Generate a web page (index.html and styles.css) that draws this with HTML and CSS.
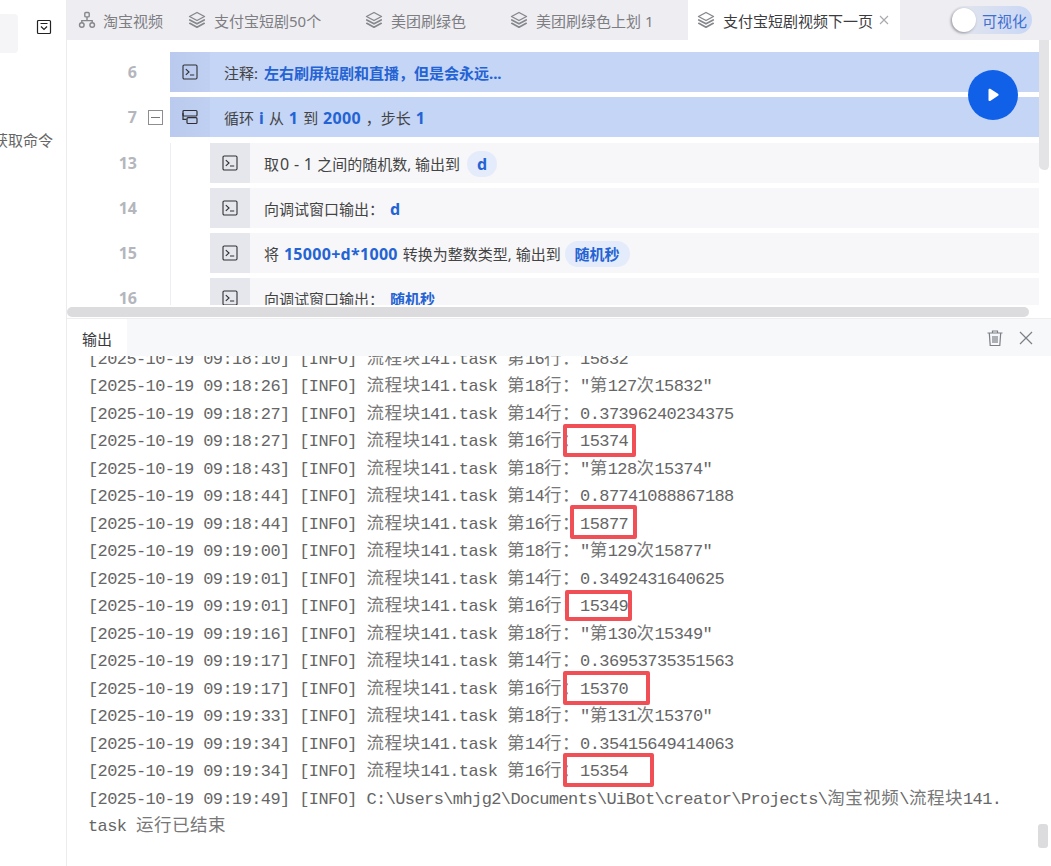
FILE: index.html
```html
<!DOCTYPE html>
<html lang="zh">
<head>
<meta charset="utf-8">
<title>流程块</title>
<link rel="stylesheet" href="styles.css">
</head>
<body>
<svg class="defs" width="0" height="0" aria-hidden="true">
  <symbol id="i-layers" viewBox="0 0 18 18"><path d="M9 1.5 16.5 5.5 9 9.5 1.5 5.5Z" fill="none" stroke="currentColor" stroke-width="1.4" stroke-linejoin="round"/><path d="M1.8 9 9 12.8 16.2 9M1.8 12.3 9 16.2 16.2 12.3" fill="none" stroke="currentColor" stroke-width="1.7" stroke-linecap="round" stroke-linejoin="round"/></symbol>
  <symbol id="i-term" viewBox="0 0 16 16"><rect x="1" y="1" width="14" height="14" rx="1.2" fill="none" stroke="currentColor" stroke-width="1.1"/><path d="M3.8 5.2 7 8 3.8 10.8M8 11h4.2" fill="none" stroke="currentColor" stroke-width="1.1"/></symbol>
</svg>
<div class="app">
  <aside class="sidebar">
    <div class="side-top">
      <div class="side-active"></div>
      <svg class="side-icon" width="16" height="16" viewBox="0 0 16 16"><rect x="1.5" y="1.5" width="13" height="13" rx="1" fill="#fff" stroke="#222" stroke-width="1.2"/><path d="M4.5 4.5h7" stroke="#222" stroke-width="1"/><path d="M5 7.5 8 10.5 11 7.5" fill="none" stroke="#222" stroke-width="1.2"/></svg>
    </div>
    <div class="side-label"><span>获取命令</span></div>
  </aside>
  <main class="main">
    <nav class="tabs">
      <div class="tab tab-1"><svg class="tab-icon" width="18" height="18" viewBox="0 0 18 18"><g fill="none" stroke="currentColor" stroke-width="1.4"><rect x="6.8" y="1.5" width="4.4" height="4.4" rx="1"/><circle cx="3.8" cy="14" r="2.3"/><circle cx="14.2" cy="14" r="2.3"/><path d="M9 6v3.6M3.8 11.6V9.6h10.4v2"/></g></svg>淘宝视频</div>
      <div class="tab tab-2"><svg class="tab-icon" width="18" height="18"><use href="#i-layers"/></svg>支付宝短剧50个</div>
      <div class="tab tab-3"><svg class="tab-icon" width="18" height="18"><use href="#i-layers"/></svg>美团刷绿色</div>
      <div class="tab tab-4"><svg class="tab-icon" width="18" height="18"><use href="#i-layers"/></svg>美团刷绿色上划 1</div>
      <div class="tab tab-active"><svg class="tab-icon" width="18" height="18"><use href="#i-layers"/></svg>支付宝短剧视频下一页<svg class="tab-close" width="10" height="10" viewBox="0 0 10 10"><path d="M1 1 9 9M9 1 1 9" stroke="#a8a8ad" stroke-width="1.1"/></svg></div>
      <div class="toggle"><span class="knob"></span><span class="toggle-text">可视化</span></div>
    </nav>
    <section class="editor">
      <div class="row">
        <div class="gutter"><span class="num">6</span><span class="fold-slot"></span></div>
        <div class="block selected"><div class="cell"><svg width="16" height="16"><use href="#i-term"/></svg></div><div class="stmt">注释: <b class="val">左右刷屏短剧和直播，但是会永远...</b></div></div>
      </div>
      <div class="row">
        <div class="gutter"><span class="num">7</span><span class="fold-slot"><span class="fold"></span></span></div>
        <div class="block selected"><div class="cell"><svg width="16" height="16" viewBox="0 0 16 16"><g fill="none" stroke="currentColor" stroke-width="1.2"><rect x="1" y="1.5" width="14" height="5.5" rx="1"/><path d="M1 4v6.3h3.5"/><rect x="5" y="8.7" width="10" height="5.8" rx="1"/></g></svg></div><div class="stmt">循环 <b class="n">i</b> 从 <b class="n">1</b> 到 <b class="n">2000</b> ，步长 <b class="n">1</b></div></div>
      </div>
      <div class="nested">
        <div class="row">
          <div class="gutter"><span class="num">13</span><span class="fold-slot"></span></div>
          <div class="block child"><div class="cell"><svg width="16" height="16"><use href="#i-term"/></svg></div><div class="stmt">取<span class="lat">0 - 1</span> 之间的随机数, 输出到 <span class="pill n">d</span></div></div>
        </div>
        <div class="row">
          <div class="gutter"><span class="num">14</span><span class="fold-slot"></span></div>
          <div class="block child"><div class="cell"><svg width="16" height="16"><use href="#i-term"/></svg></div><div class="stmt">向调试窗口输出： <b class="val n">d</b></div></div>
        </div>
        <div class="row">
          <div class="gutter"><span class="num">15</span><span class="fold-slot"></span></div>
          <div class="block child"><div class="cell"><svg width="16" height="16"><use href="#i-term"/></svg></div><div class="stmt">将 <b class="n">15000+d*1000</b> 转换为整数类型, 输出到 <span class="pill">随机秒</span></div></div>
        </div>
        <div class="row">
          <div class="gutter"><span class="num">16</span><span class="fold-slot"></span></div>
          <div class="block child"><div class="cell"><svg width="16" height="16"><use href="#i-term"/></svg></div><div class="stmt">向调试窗口输出： <b class="val">随机秒</b></div></div>
        </div>
      </div>
      <div class="vscroll"></div>
      <button class="play" aria-label="运行"><svg width="16" height="16" viewBox="0 0 16 16"><path d="M3.5 2.8c0-.9.9-1.4 1.7-1L13 6.7c.8.5.8 1.6 0 2.1l-7.8 5.1c-.8.5-1.7 0-1.7-1Z" fill="#fff"/></svg></button>
    </section>
    <div class="hscroll"><div class="hbar"></div></div>
    <section class="output">
      <header class="out-head">
        <div class="out-tab">输出</div>
        <div class="out-actions">
          <svg width="18" height="18" viewBox="0 0 18 18"><g fill="none" stroke="#7b7f86" stroke-width="1.2"><path d="M1.5 4h15M6.5 4V2h5v2M3.3 4l.9 12.5h9.6L14.7 4M7 7v7M9 7v7M11 7v7"/></g></svg>
          <svg width="14" height="14" viewBox="0 0 14 14"><path d="M1 1 13 13M13 1 1 13" stroke="#7b7f86" stroke-width="1.2"/></svg>
        </div>
      </header>
      <div class="log-view">
        <div class="log">
          <div>[2025-10-19 09:18:10] [INFO] <em>流程块</em>141.task <em>第</em>16<em>行：</em>15832</div>
          <div>[2025-10-19 09:18:26] [INFO] <em>流程块</em>141.task <em>第</em>18<em>行：</em>"<em>第</em>127<em>次</em>15832"</div>
          <div>[2025-10-19 09:18:27] [INFO] <em>流程块</em>141.task <em>第</em>14<em>行：</em>0.37396240234375</div>
          <div>[2025-10-19 09:18:27] [INFO] <em>流程块</em>141.task <em>第</em>16<em>行：</em>15374</div>
          <div>[2025-10-19 09:18:43] [INFO] <em>流程块</em>141.task <em>第</em>18<em>行：</em>"<em>第</em>128<em>次</em>15374"</div>
          <div>[2025-10-19 09:18:44] [INFO] <em>流程块</em>141.task <em>第</em>14<em>行：</em>0.87741088867188</div>
          <div>[2025-10-19 09:18:44] [INFO] <em>流程块</em>141.task <em>第</em>16<em>行：</em>15877</div>
          <div>[2025-10-19 09:19:00] [INFO] <em>流程块</em>141.task <em>第</em>18<em>行：</em>"<em>第</em>129<em>次</em>15877"</div>
          <div>[2025-10-19 09:19:01] [INFO] <em>流程块</em>141.task <em>第</em>14<em>行：</em>0.3492431640625</div>
          <div>[2025-10-19 09:19:01] [INFO] <em>流程块</em>141.task <em>第</em>16<em>行：</em>15349</div>
          <div>[2025-10-19 09:19:16] [INFO] <em>流程块</em>141.task <em>第</em>18<em>行：</em>"<em>第</em>130<em>次</em>15349"</div>
          <div>[2025-10-19 09:19:17] [INFO] <em>流程块</em>141.task <em>第</em>14<em>行：</em>0.36953735351563</div>
          <div>[2025-10-19 09:19:17] [INFO] <em>流程块</em>141.task <em>第</em>16<em>行：</em>15370</div>
          <div>[2025-10-19 09:19:33] [INFO] <em>流程块</em>141.task <em>第</em>18<em>行：</em>"<em>第</em>131<em>次</em>15370"</div>
          <div>[2025-10-19 09:19:34] [INFO] <em>流程块</em>141.task <em>第</em>14<em>行：</em>0.35415649414063</div>
          <div>[2025-10-19 09:19:34] [INFO] <em>流程块</em>141.task <em>第</em>16<em>行：</em>15354</div>
          <div>[2025-10-19 09:19:49] [INFO] C:\Users\mhjg2\Documents\UiBot\creator\Projects\<em>淘宝视频</em>\<em>流程块</em>141.<wbr>task <em>运行已结束</em></div>
        </div>
        <div class="mark mark-1"></div>
        <div class="mark mark-2"></div>
        <div class="mark mark-3"></div>
        <div class="mark mark-4"></div>
        <div class="mark mark-5"></div>
        <div class="log-scroll"></div>
      </div>
    </section>
  </main>
</div>
</body>
</html>
```
FILE: styles.css
```css
* { box-sizing: border-box; }
html, body { margin: 0; padding: 0; background: #fff; }
body { font-family: "Noto Sans", "Noto Sans CJK SC", "Liberation Sans", sans-serif; font-size: 15px; color: #444; overflow: hidden; }
.defs { position: absolute; }
.app { display: flex; width: 1051px; height: 866px; overflow: hidden; }

.sidebar { width: 67px; flex: none; border-right: 1px solid #ececee; background: #fff; overflow: hidden; }
.side-top { display: flex; align-items: center; height: 39px; margin-top: 14px; }
.side-active { width: 18px; height: 39px; background: #f5f5f7; border-radius: 0 4px 4px 0; }
.side-icon { margin-left: 18px; margin-top: -13px; }
.side-label { display: flex; justify-content: flex-end; width: 53px; margin-top: 77px; line-height: 20px; color: #666; white-space: nowrap; }
.side-label span { flex: none; }

.main { flex: 1; min-width: 0; display: flex; flex-direction: column; }

.tabs { display: flex; align-items: stretch; height: 40px; flex: none; background: #eeeef2; color: #7d7d82; position: relative; }
.tab { display: flex; align-items: center; white-space: nowrap; }
.tab-icon { flex: none; margin-right: 8px; color: #85878c; }
.tab-1 { width: 111px; padding-left: 11px; }
.tab-1 .tab-icon { margin-right: 7px; }
.tab-2 { width: 177px; padding-left: 10px; }
.tab-3 { width: 145px; padding-left: 10px; }
.tab-4 { width: 188px; padding-left: 10px; }
.tab-active { width: 212px; padding-left: 9px; background: #fff; color: #3c3c3f; }
.tab-close { margin-left: 6px; }
.toggle { position: absolute; left: 883px; top: 6px; width: 82px; height: 28px; border-radius: 14px; background: linear-gradient(90deg, #e6e7ec, #c9d7f6); display: flex; align-items: center; padding: 0 5px 0 2px; justify-content: space-between; }
.knob { width: 24px; height: 24px; border-radius: 50%; background: #fff; box-shadow: -1px 1px 3px rgba(0,0,0,.35); }
.toggle-text { color: #3f6fd1; }

.editor { position: relative; height: 265px; flex: none; padding-top: 12px; overflow: hidden; }
.row { display: flex; height: 40px; margin-bottom: 5px; width: 972px; }
.nested { margin-top: 6px; background: linear-gradient(90deg, transparent 103px, #eeeef0 103px, #eeeef0 104px, transparent 104px); }
.gutter { width: 103px; flex: none; display: flex; align-items: center; font-weight: 700; color: #b4b6bd; font-size: 16px; }
.num { width: 70px; text-align: right; }
.fold-slot { margin-left: 11px; width: 15px; height: 15px; }
.fold { display: block; width: 15px; height: 15px; border: 1px solid #8d8d92; position: relative; }
.fold::after { content: ""; position: absolute; left: 2px; right: 2px; top: 6px; height: 1px; background: #77777b; }
.block { flex: 1; display: flex; align-items: center; min-width: 0; }
.cell { width: 40px; height: 40px; flex: none; display: flex; align-items: center; justify-content: center; color: #2f2f33; }
.stmt { white-space: pre; line-height: 26px; padding-top: 1px; }
.stmt b { color: #2463d3; font-weight: 700; }
.stmt .n, .pill.n { font-size: 16px; }
.stmt .n { letter-spacing: .3px; margin: 0 1px; }
.lat { font-size: 16px; letter-spacing: .3px; margin-left: 1px; }
.selected { background: #c4d5f6; }
.selected .cell { background: linear-gradient(90deg, #b9caee, #bfd0f2); }
.selected .stmt { margin-left: 14px; }
.child { margin-left: 40px; background: #f7f7f9; }
.child .cell { background: #e6e7ec; }
.child .stmt { margin-left: 14px; }
.pill { display: inline-block; height: 26px; line-height: 26px; padding: 0 10px; border-radius: 13px; background: #e4ebfa; color: #2463d3; font-weight: 700; vertical-align: top; }
.pill.n { margin-left: 3px; }
.stmt .val { margin-left: 2px; }
.vscroll { position: absolute; right: 0; top: 0; width: 12px; height: 130px; background: #e4e4e6; border: 1px solid #fff; border-width: 0 2px 0 0; border-radius: 0 0 5px 5px; }
.play { position: absolute; left: 901px; top: 30px; width: 50px; height: 50px; padding: 0; border: 0; border-radius: 50%; background: #1160e8; display: flex; align-items: center; justify-content: center; }

.hscroll { height: 13px; flex: none; padding-top: 2px; background: #fff; }
.hbar { width: 962px; height: 10px; border-radius: 5px; background: #dcdcde; }

.output { flex: 1; min-height: 0; display: flex; flex-direction: column; border-top: 1px solid #eeeef0; }
.out-head { height: 37px; flex: none; display: flex; justify-content: space-between; align-items: center; background: #f7f8fa; position: relative; z-index: 1; }
.out-tab { width: 60px; height: 100%; padding-left: 15px; line-height: 40px; background: #fff; color: #3a3a3d; }
.out-actions { display: flex; align-items: center; gap: 15px; padding-right: 18px; }
.log-view { flex: 1; min-height: 0; position: relative; overflow: hidden; }
.log { margin-top: -10.5px; padding: 0 30px 0 21px; font-family: "Liberation Mono", "Noto Sans CJK SC", monospace; font-size: 17px; letter-spacing: -.6px; line-height: 27.5px; color: #666; overflow-wrap: anywhere; }
.log em { font-family: "Noto Sans CJK SC", sans-serif; font-style: normal; font-size: 17.5px; letter-spacing: .5px; line-height: 1; color: #777; }
.mark { position: absolute; border: 4px solid #ef4f55; border-radius: 2px; }
.mark-1 { left: 496px; top: 68px; width: 73px; height: 33px; }
.mark-2 { left: 503px; top: 149px; width: 67px; height: 34px; }
.mark-3 { left: 498px; top: 234px; width: 67px; height: 31px; }
.mark-4 { left: 496px; top: 315px; width: 87px; height: 34px; }
.mark-5 { left: 496px; top: 397px; width: 91px; height: 34px; }
.log-scroll { position: absolute; left: 971px; top: 468px; width: 10px; height: 24px; border-radius: 3px; background: #dcdcde; }
```
